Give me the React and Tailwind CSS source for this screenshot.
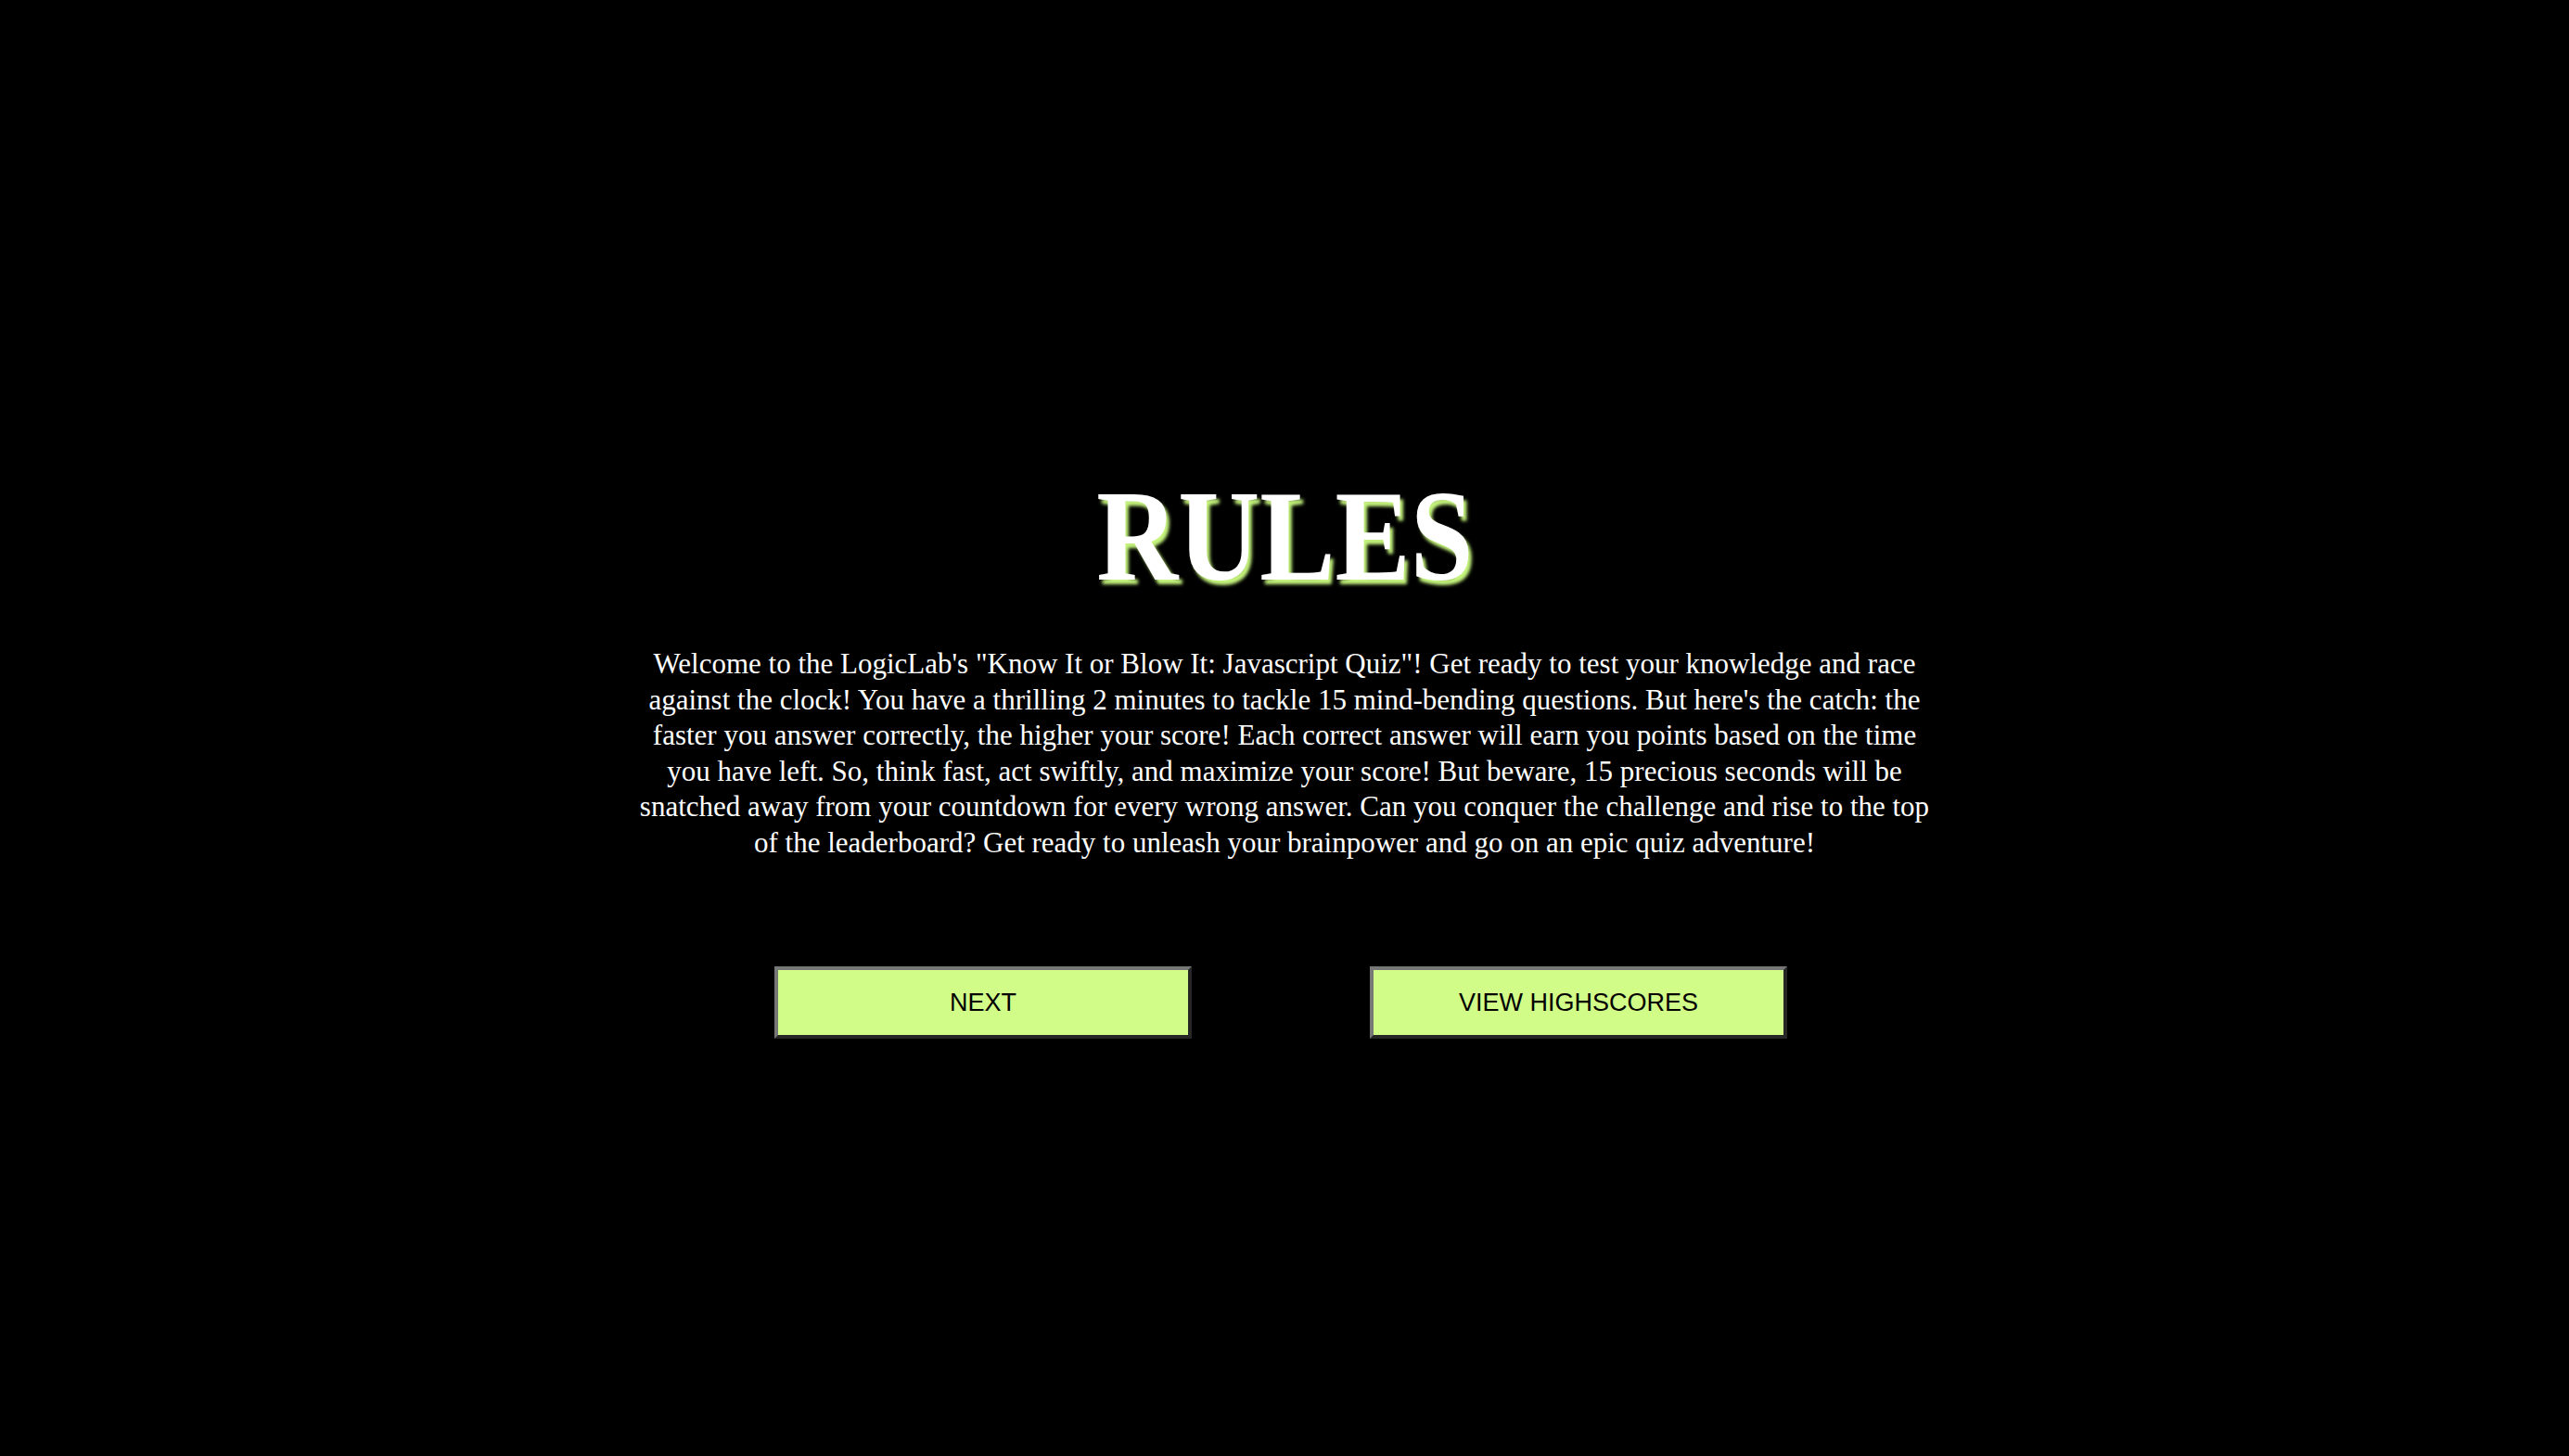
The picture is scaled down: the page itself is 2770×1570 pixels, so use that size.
import React from "react";

const lines = [
  `Welcome to the LogicLab's "Know It or Blow It: Javascript Quiz"! Get ready to test your knowledge and race`,
  `against the clock! You have a thrilling 2 minutes to tackle 15 mind-bending questions. But here's the catch: the`,
  `faster you answer correctly, the higher your score! Each correct answer will earn you points based on the time`,
  `you have left. So, think fast, act swiftly, and maximize your score! But beware, 15 precious seconds will be`,
  `snatched away from your countdown for every wrong answer. Can you conquer the challenge and rise to the top`,
  `of the leaderboard? Get ready to unleash your brainpower and go on an epic quiz adventure!`,
];

function Button({ children }) {
  return (
    <button className="w-[450px] h-[78px] bg-[#d2fc88] border-4 border-t-[#777777] border-l-[#777777] border-b-[#262626] border-r-[#262626] text-black text-[27px] font-['Liberation_Sans',Arial,sans-serif]">
      {children}
    </button>
  );
}

export default function App() {
  return (
    <div className="min-h-screen w-full bg-black flex flex-col items-center pt-[508px]">
      {/* Title */}
      <h1 className="text-white text-[140px] leading-none font-bold font-['Liberation_Serif',serif] scale-x-[0.87] [text-shadow:4px_5px_4px_#c6f57e]">
        RULES
      </h1>

      {/* Rules text */}
      <p className="mt-[49px] text-white text-center text-[31px] leading-[38.5px] whitespace-nowrap font-['Liberation_Serif',serif]">
        {lines.map((line, i) => (
          <span key={i} className="block">
            {line}
          </span>
        ))}
      </p>

      <div className="mt-[114px] flex gap-[192px] pr-[8px]">
        <Button>NEXT</Button>
        <Button>VIEW HIGHSCORES</Button>
      </div>
    </div>
  );
}
